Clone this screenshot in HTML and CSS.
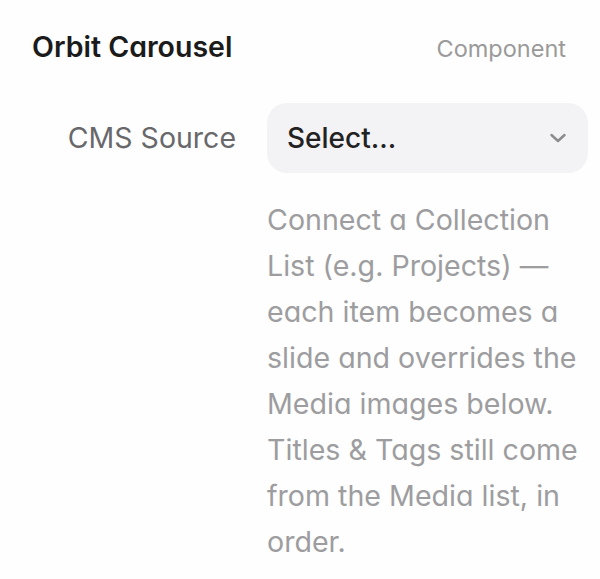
FILE: index.html
```html
<!DOCTYPE html>
<html lang="en">
<head>
    <meta charset="UTF-8">
    <meta name="viewport" content="width=device-width, initial-scale=1.0">
    <title>Orbit Carousel</title>
    <link rel="stylesheet" href="styles.css">
</head>
<body>

<div class="panel">
    <div class="panel-header">
        <h2 class="panel-title">Orbit Carousel</h2>
        <span class="panel-kind">Component</span>
    </div>

    <div class="prop-row">
        <label class="prop-label" for="cms-source">CMS Source</label>
        <div class="prop-control">
            <div class="select" id="cms-source">
                <span class="select-value">Select...</span>
                <svg class="select-chevron" width="20" height="20" viewBox="0 0 20 20">
                    <path d="M3.5 7L10 13L16.5 7" fill="none" stroke="#8c8b90" stroke-width="2.5" stroke-linecap="round" stroke-linejoin="round"/>
                </svg>
            </div>
            <p class="prop-help">Connect a Collection List (e.g. Projects) — each item becomes a slide and overrides the Media images below. Titles &amp; Tags still come from the Media list, in order.</p>
        </div>
    </div>
</div>

</body>
</html>
```

FILE: styles.css
```css
body {
    margin: 0;
    background: #fefefe;
    font-family: Inter, "Noto Sans", sans-serif;
    font-feature-settings: "cv11";
    color: #1a1a1a;
}
.panel {
    padding: 30px 12px 0 32px;
}
.panel-header {
    display: flex;
    justify-content: space-between;
    align-items: baseline;
    padding-right: 22px;
}
.panel-title {
    margin: 0;
    font-size: 28.5px;
    line-height: 34px;
    font-weight: 600;
    color: #1b1b1b;
}
.panel-kind {
    font-size: 23.5px;
    color: #9a9a9a;
}
.prop-row {
    display: grid;
    grid-template-columns: 204px 321px;
    column-gap: 31px;
    margin-top: 39px;
}
.prop-label {
    font-size: 28.5px;
    color: #68686b;
    text-align: right;
    line-height: 70px;
}
.select {
    display: flex;
    align-items: center;
    justify-content: space-between;
    height: 70px;
    padding: 0 20px 0 20px;
    background: #f3f2f5;
    border-radius: 20px;
    box-sizing: border-box;
}
.select-value {
    font-size: 28px;
    font-weight: 500;
    color: #222;
}
.prop-help {
    margin: 24px 0 0;
    font-size: 28.6px;
    line-height: 46px;
    color: #9d9da0;
}
```
